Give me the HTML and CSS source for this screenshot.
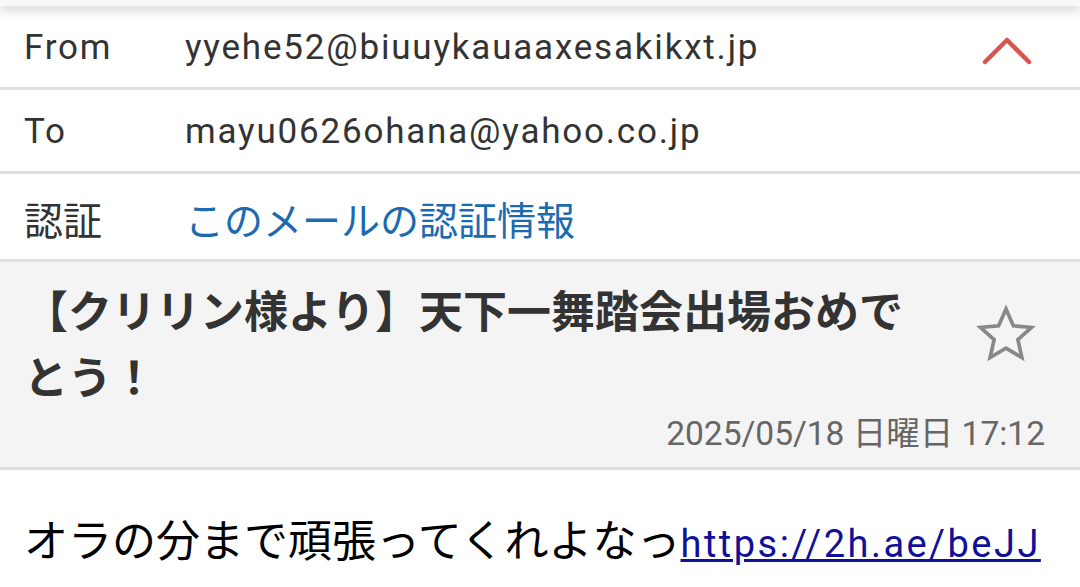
FILE: index.html
```html
<html>

<head>
    <meta charset="utf-8">
    <title>メール</title>
    <link rel="stylesheet" href="styles.css">
</head>

<body>
    <div class="topbar"></div>

    <div class="header">
        <div class="row">
            <span class="label">From</span>
            <span class="value">yyehe52@biuuykauaaxesakikxt.jp</span>
            <svg class="chevron" width="52" height="32" viewBox="0 0 52 32">
                <polyline points="4,26 26,4 48,26" fill="none" stroke="#d9534f" stroke-width="4.5"
                    stroke-linecap="round" stroke-linejoin="round" />
            </svg>
        </div>
        <div class="row">
            <span class="label">To</span>
            <span class="value">mayu0626ohana@yahoo.co.jp</span>
        </div>
        <div class="row">
            <span class="label jp">認証</span>
            <a class="value jp auth" href="#">このメールの認証情報</a>
        </div>
    </div>

    <div class="subject">
        <div class="subject-top">
            <h1>【クリリン様より】天下一舞踏会出場おめでとう！</h1>
            <svg class="star" width="68" height="68" viewBox="0 0 24 24">
                <path d="M12 3.2l2.6 5.9 6.4.6-4.8 4.3 1.4 6.3L12 17l-5.6 3.3 1.4-6.3L3 9.7l6.4-.6z" fill="none"
                    stroke="#888" stroke-width="1.3" stroke-linejoin="miter" />
            </svg>
        </div>
        <div class="date">2025/05/18 日曜日 17:12</div>
    </div>

    <div class="body">
        <p>オラの分まで頑張ってくれよなっ<a href="#">https://2h.ae/beJJ</a></p>
    </div>
</body>

</html>
```

FILE: styles.css
```css
body {
    margin: 0;
    background-color: #fff;
    font-family: Roboto, "Noto Sans CJK JP", sans-serif;
    color: #333;
    overflow: hidden;
}

.topbar {
    height: 6px;
    background-color: #f8f8f8;
    box-shadow: 0 4px 10px rgba(0, 0, 0, 0.22);
    position: relative;
    z-index: 2;
}

.row {
    display: flex;
    align-items: center;
    height: 79px;
    padding: 2px 24px 0 24px;
    border-bottom: 3px solid #e0e0e0;
}

.row:last-child {
    height: 83px;
}

.label {
    width: 161px;
    font-size: 35px;
    letter-spacing: 1.8px;
}

.value {
    flex: 1;
    font-size: 35px;
    letter-spacing: 1.8px;
}

.jp {
    font-size: 39px;
    letter-spacing: 0;
}

.auth {
    color: #1a6bb0;
    text-decoration: none;
}

.chevron {
    margin-right: 23px;
    margin-top: 8px;
}

.subject {
    background-color: #f4f4f4;
    border-bottom: 3px solid #e0e0e0;
    padding: 18px 35px 14px 24px;
    height: 173px;
}

.subject-top {
    display: flex;
    align-items: flex-start;
}

h1 {
    flex: 1;
    margin: 0;
    font-size: 44px;
    font-weight: bold;
    line-height: 66px;
    color: #333;
    padding-right: 60px;
}

.star {
    margin-top: 20px;
    margin-right: 5px;
}

.date {
    text-align: right;
    font-size: 33.5px;
    color: #666;
    margin-top: -6px;
}

.body {
    padding: 0 24px;
}

.body p {
    margin: 36px 0 0 0;
    font-size: 44px;
    color: #000;
}

.body a {
    color: #10109a;
    font-size: 38px;
    letter-spacing: 2.5px;
}
```
